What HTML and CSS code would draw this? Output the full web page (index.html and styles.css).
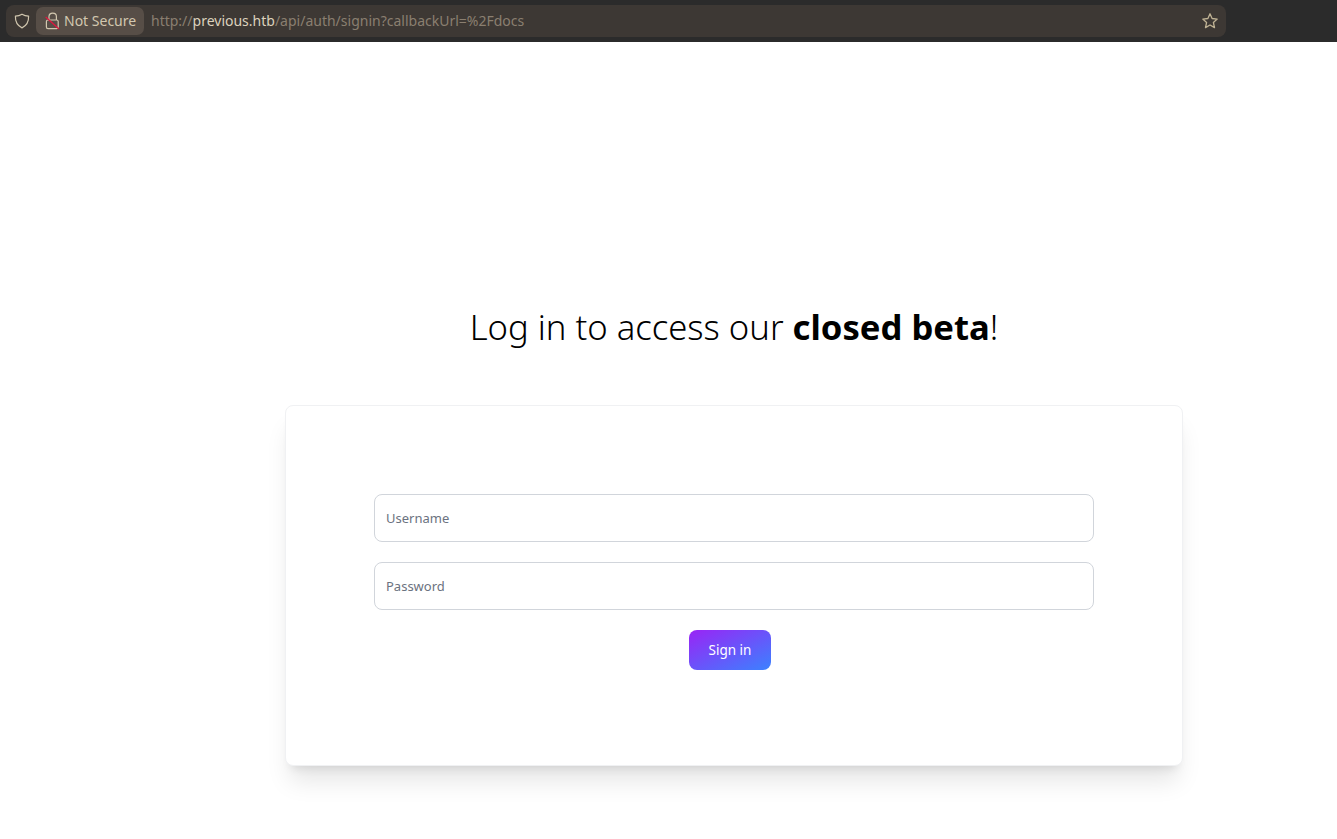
FILE: index.html
```html
<!DOCTYPE html>
<html lang="en">
<head>
<meta charset="utf-8">
<title>Sign in</title>
<link rel="stylesheet" href="styles.css">
</head>
<body>
<header class="toolbar">
  <div class="urlbar">
    <svg class="shield" width="16" height="16" viewBox="0 0 16 16" fill="none"><path d="M8 1.2 C10 2.4 12.2 3 14.6 3.1 C14.8 8.5 13 12.6 8 14.9 C3 12.6 1.2 8.5 1.4 3.1 C3.8 3 6 2.4 8 1.2 Z" stroke="#cfc5ad" stroke-width="1.2" stroke-linejoin="round"/></svg>
    <div class="badge">
      <svg class="lock" width="16" height="20" viewBox="0 0 16 20" fill="none"><path d="M5 10 V6.6 C5 2 12.4 2 12.4 6.6 V10" stroke="#d2c7af" stroke-width="1.2"/><rect x="2.4" y="10" width="11.8" height="8.6" rx="1.6" stroke="#d2c7af" stroke-width="1.2"/><path d="M1.7 7 L15 19" stroke="#e0163f" stroke-width="1.3"/></svg>
      <span>Not Secure</span>
    </div>
    <div class="url"><span class="dim">http://</span><span class="host">previous.htb</span><span class="dim">/api/auth/signin?callbackUrl=%2Fdocs</span></div>
    <svg class="star" width="18" height="18" viewBox="0 0 18 18" fill="none"><path d="M9 1.8 L11.1 6.5 L16.2 7.1 L12.4 10.5 L13.5 15.6 L9 13 L4.5 15.6 L5.6 10.5 L1.8 7.1 L6.9 6.5 Z" stroke="#bfb294" stroke-width="1.3" stroke-linejoin="round"/></svg>
  </div>
</header>
<main class="page">
  <h1 class="title">Log in to access our <strong>closed beta</strong>!</h1>
  <form class="card">
    <input class="field" type="text" placeholder="Username">
    <input class="field" type="password" placeholder="Password">
    <button class="submit" type="button">Sign in</button>
  </form>
</main>
</body>
</html>
```
FILE: styles.css
```css
* { box-sizing: border-box; }
html, body { margin: 0; height: 100%; overflow: hidden; background: #fff; }
body { font-family: "Noto Sans", "Open Sans", sans-serif; }

.toolbar {
  height: 42px;
  background: #2b2b2b;
  padding: 5px 111px 0 6px;
}
.urlbar {
  height: 32px;
  background: #3d3834;
  border-radius: 8px;
  display: flex;
  align-items: center;
  padding: 0 7px 0 8px;
}
.shield { flex: none; margin-right: 6px; }
.badge {
  height: 28px;
  width: 108px;
  flex: none;
  background: #574e47;
  border-radius: 7px;
  display: flex;
  align-items: center;
  padding: 0 0 2px 8px;
  gap: 4px;
  color: #d2c7af;
  font-size: 14px;
}
.lock { flex: none; }
.url {
  flex: 1;
  margin-left: 7px;
  padding-bottom: 2px;
  font-size: 14px;
  white-space: nowrap;
}
.dim { color: #8a7f70; }
.host { color: #dcd2bd; }
.star { flex: none; }

.page {
  padding-left: 131px;
  display: flex;
  flex-direction: column;
  align-items: center;
}
.title {
  margin: 264px 0 0;
  height: 42px;
  line-height: 42px;
  font-size: 34.65px;
  font-weight: 300;
  color: #000;
  white-space: nowrap;
}
.title strong { font-weight: 700; }
.card {
  margin-top: 57px;
  width: 898px;
  height: 361px;
  background: #fff;
  border: 1px solid #f0f1f3;
  border-radius: 8px;
  box-shadow: 0 20px 25px -5px rgba(0,0,0,.1), 0 8px 10px -6px rgba(0,0,0,.1);
  padding: 88px 88px 0;
  display: flex;
  flex-direction: column;
  align-items: center;
}
.field {
  width: 720px;
  height: 48px;
  flex: none;
  border: 1px solid #d1d5db;
  border-radius: 8px;
  padding: 0 11px;
  margin-bottom: 20px;
  font-family: inherit;
  font-size: 13px;
  color: #111827;
  background: #fff;
  outline: none;
}
.field::placeholder { color: #6b7280; opacity: 1; }
.submit {
  width: 82px;
  height: 40px;
  margin-right: 8px;
  padding: 0 0 1px;
  border: 0;
  border-radius: 8px;
  background-image: linear-gradient(to bottom right, #9a24f5, #3b82ff);
  color: #fff;
  font-family: inherit;
  font-size: 13.5px;
  font-weight: 400;
}
```
